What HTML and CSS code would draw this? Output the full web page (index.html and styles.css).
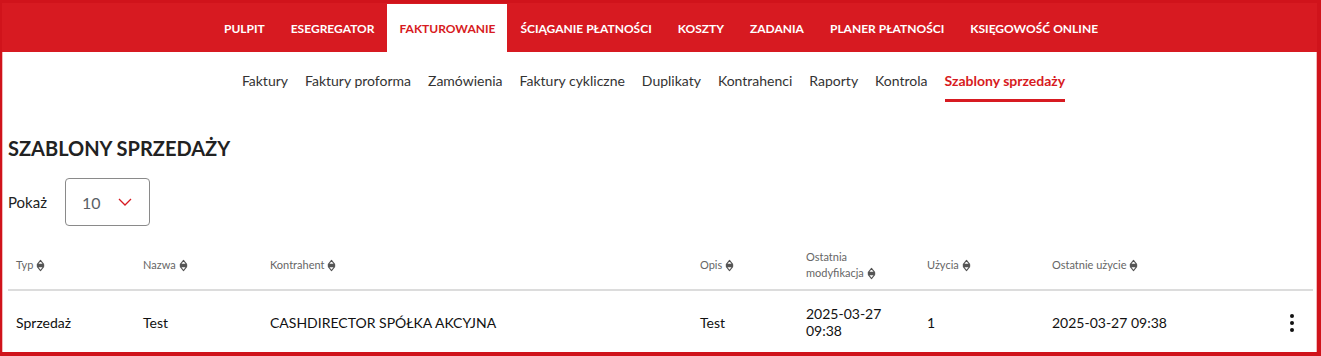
FILE: index.html
```html
<!DOCTYPE html>
<html lang="pl">
<head>
    <meta charset="UTF-8">
    <title>Szablony sprzedaży</title>
    <link rel="stylesheet" href="styles.css">
</head>
<body>
<svg width="0" height="0" class="defs">
    <symbol id="sort" viewBox="0 0 9 13">
        <path d="M1.3 5.4 L4.5 1.4 L7.7 5.4 Z M0.8 6.5 H8.2 M1.3 7.6 L4.5 11.6 L7.7 7.6 Z" fill="none" stroke="#555" stroke-width="1.1" stroke-linejoin="round"/>
    </symbol>
</svg>
<div class="frame">
    <nav class="topnav">
        <a href="#">Pulpit</a>
        <a href="#">eSegregator</a>
        <a href="#" class="active">Fakturowanie</a>
        <a href="#">Ściąganie płatności</a>
        <a href="#">Koszty</a>
        <a href="#">Zadania</a>
        <a href="#">Planer płatności</a>
        <a href="#">Księgowość online</a>
    </nav>
    <nav class="subnav">
        <a href="#">Faktury</a>
        <a href="#">Faktury proforma</a>
        <a href="#">Zamówienia</a>
        <a href="#">Faktury cykliczne</a>
        <a href="#">Duplikaty</a>
        <a href="#">Kontrahenci</a>
        <a href="#">Raporty</a>
        <a href="#">Kontrola</a>
        <a href="#" class="active">Szablony sprzedaży</a>
    </nav>

    <main class="content">
        <h1>Szablony sprzedaży</h1>
        <div class="show">
            <span>Pokaż</span>
            <div class="select">
                <span>10</span>
                <svg width="14" height="8" viewBox="0 0 14 8"><path d="M1 1 L7 7 L13 1" fill="none" stroke="#d71a21" stroke-width="1.3"/></svg>
            </div>
        </div>

        <table>
            <colgroup>
                <col style="width:127px"><col style="width:127px"><col style="width:430px"><col style="width:106px">
                <col style="width:121px"><col style="width:125px"><col style="width:226px"><col>
            </colgroup>
            <thead>
                <tr>
                    <th>Typ <svg class="sort"><use href="#sort"/></svg></th>
                    <th>Nazwa <svg class="sort"><use href="#sort"/></svg></th>
                    <th>Kontrahent <svg class="sort"><use href="#sort"/></svg></th>
                    <th>Opis <svg class="sort"><use href="#sort"/></svg></th>
                    <th>Ostatnia<br>modyfikacja <svg class="sort"><use href="#sort"/></svg></th>
                    <th>Użycia <svg class="sort"><use href="#sort"/></svg></th>
                    <th>Ostatnie użycie <svg class="sort"><use href="#sort"/></svg></th>
                    <th></th>
                </tr>
            </thead>
            <tbody>
                <tr>
                    <td>Sprzedaż</td>
                    <td>Test</td>
                    <td>CASHDIRECTOR SPÓŁKA AKCYJNA</td>
                    <td>Test</td>
                    <td>2025-03-27<br>09:38</td>
                    <td>1</td>
                    <td>2025-03-27 09:38</td>
                    <td class="actions"><span class="kebab"><b></b><b></b><b></b></span></td>
                </tr>
            </tbody>
        </table>
    </main>
</div>
</body>
</html>
```

FILE: styles.css
```css
* {
    margin: 0;
    padding: 0;
    box-sizing: border-box;
}
body {
    font-family: Lato, "Open Sans", sans-serif;
    background: #fff;
    color: #222;
}
a {
    text-decoration: none;
}
.defs {
    position: absolute;
}
.frame {
    height: 356px;
    overflow: hidden;
    border-style: solid;
    border-color: #d0131b;
    border-width: 3px 4px 4px 2px;
    box-shadow: inset -1px 0 0 #f3b9bb, inset 1px 0 0 #f3b9bb;
}
.topnav {
    height: 49px;
    background: #d71a21;
    display: flex;
    justify-content: center;
    align-items: stretch;
    padding-top: 1px;
    padding-left: 3px;
}
.topnav a {
    display: flex;
    align-items: center;
    padding: 0 13px;
    color: #fff;
    font-size: 12px;
    font-weight: 700;
    text-transform: uppercase;
}
.topnav a.active {
    background: #fff;
    color: #d71a21;
    padding: 0 12px;
}
.subnav {
    display: flex;
    justify-content: center;
    gap: 17px;
    padding-right: 12px;
}
.subnav a {
    font-size: 14px;
    line-height: 20px;
    color: #333;
    padding: 19px 0 8px;
    border-bottom: 3px solid transparent;
}
.subnav a.active {
    color: #d71a21;
    font-weight: 700;
    border-bottom-color: #d71a21;
}
.content {
    padding: 34px 3px 0 6px;
}
h1 {
    font-size: 20px;
    line-height: 24px;
    font-weight: 700;
    text-transform: uppercase;
    color: #222;
}
.show {
    display: flex;
    align-items: center;
    gap: 18px;
    margin-top: 18px;
    font-size: 15px;
}
.select {
    width: 85px;
    height: 48px;
    border: 1px solid #8a8a8a;
    border-radius: 4px;
    display: flex;
    align-items: center;
    gap: 17px;
    padding-left: 16px;
    font-size: 16px;
    color: #5a5f66;
}
table {
    margin-top: 14px;
    width: 1305px;
    border-collapse: collapse;
    table-layout: fixed;
}
th {
    height: 50px;
    text-align: left;
    font-size: 11px;
    font-weight: 400;
    line-height: 16px;
    color: #666;
    padding: 1px 8px 0;
    vertical-align: middle;
    border-bottom: 2px solid #dcdcdc;
}
td {
    height: 60px;
    font-size: 14px;
    line-height: 17px;
    color: #111;
    padding: 3px 8px 0;
    vertical-align: middle;
}
.sort {
    width: 9px;
    height: 13px;
    vertical-align: -3px;
}
.actions {
    text-align: center;
}
.kebab {
    display: inline-flex;
    flex-direction: column;
    gap: 3px;
    vertical-align: middle;
}
.kebab b {
    width: 4px;
    height: 4px;
    border-radius: 50%;
    background: #111;
}
```
